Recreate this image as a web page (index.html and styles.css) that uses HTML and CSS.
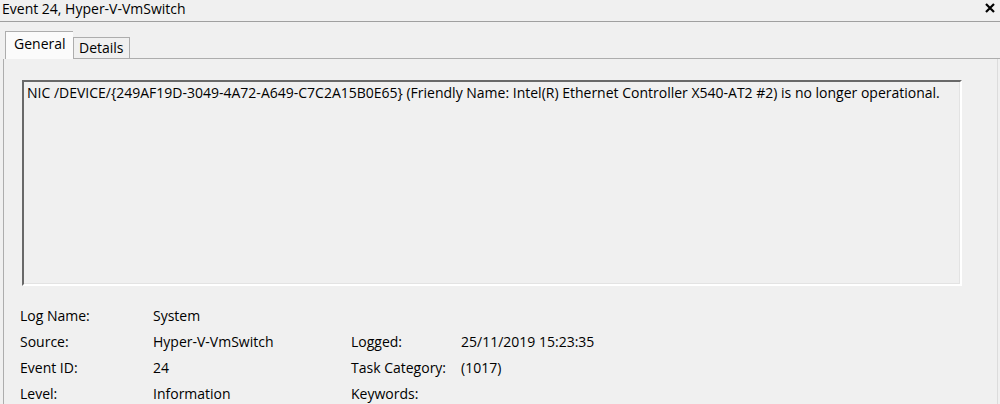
FILE: index.html
```html
<!DOCTYPE html>
<html>
<head>
<meta charset="utf-8">
<link rel="stylesheet" href="styles.css">
</head>
<body>
<div class="window">
  <div class="titlebar">
    <span class="title">Event 24, Hyper-V-VmSwitch</span>
    <svg class="close" width="10" height="10" viewBox="0 0 10 10"><path d="M1 1 L9 9 M9 1 L1 9" stroke="#000" stroke-width="2.2" fill="none"/></svg>
  </div>
  <div class="tabs">
    <div class="tab active">General</div>
    <div class="tab">Details</div>
    <div class="tab-rest"></div>
  </div>
  <div class="panel">
    <div class="message">NIC /DEVICE/{249AF19D-3049-4A72-A649-C7C2A15B0E65} (Friendly Name: Intel(R) Ethernet Controller X540-AT2 #2) is no longer operational.</div>
    <div class="info">
      <div class="lbl">Log Name:</div><div class="val">System</div><div></div><div></div>
      <div class="lbl">Source:</div><div class="val">Hyper-V-VmSwitch</div><div class="lbl">Logged:</div><div class="val">25/11/2019 15:23:35</div>
      <div class="lbl">Event ID:</div><div class="val">24</div><div class="lbl">Task Category:</div><div class="val">(1017)</div>
      <div class="lbl">Level:</div><div class="val">Information</div><div class="lbl">Keywords:</div><div class="val"></div>
    </div>
  </div>
</div>
</body>
</html>
```
FILE: styles.css
```css
html, body {
  margin: 0;
  padding: 0;
  background: #f0f0f0;
  overflow: hidden;
}
body {
  font-family: "Open Sans", "Noto Sans", sans-serif;
  font-size: 14px;
  color: #000;
}
.window {
  width: 1000px;
  height: 404px;
  overflow: hidden;
}
.titlebar {
  height: 22px;
  border-bottom: 1px solid #a0a0a0;
  display: flex;
  align-items: center;
  justify-content: space-between;
  padding: 0 5px 0 2px;
  box-sizing: border-box;
}
.title {
  font-size: 14px;
  line-height: 18px;
  margin-top: -3px;
}
.close {
  margin-top: -5px;
}
.tabs {
  display: flex;
  align-items: flex-end;
  margin-top: 9px;
  padding-left: 5px;
  height: 28px;
}
.tab {
  box-sizing: border-box;
  height: 22px;
  padding: 1px 5px 0 5px;
  border: 1px solid #adadad;
  background: #f0f0f0;
  line-height: 18px;
}
.tab.active {
  height: 28px;
  width: 68px;
  padding: 3px 0 0 8px;
  background: #fbfbfb;
  border-bottom: none;
  border-right: none;
}
.tab.active + .tab {
  width: 57px;
}
.tab-rest {
  flex: 1;
  border-bottom: 1px solid #adadad;
}
.panel {
  margin-left: 3px;
  margin-right: 2px;
  border-left: 1px solid #adadad;
  border-right: 1px solid #dcdcdc;
  height: 345px;
  background: #f0f0f0;
  padding: 21px 0 0 18px;
  box-sizing: border-box;
}
.message {
  box-sizing: border-box;
  width: 940px;
  height: 206px;
  border-style: solid;
  border-width: 2px;
  border-color: #696969 #fff #fff #696969;
  box-shadow: inset -1px -1px 0 #e3e3e3;
  padding: 2px 3px;
  line-height: 18px;
  background: #f0f0f0;
}
.info {
  display: grid;
  grid-template-columns: 133px 198px 110px auto;
  grid-auto-rows: 26px;
  margin-top: 16px;
  margin-left: -2px;
  align-items: center;
}
```
